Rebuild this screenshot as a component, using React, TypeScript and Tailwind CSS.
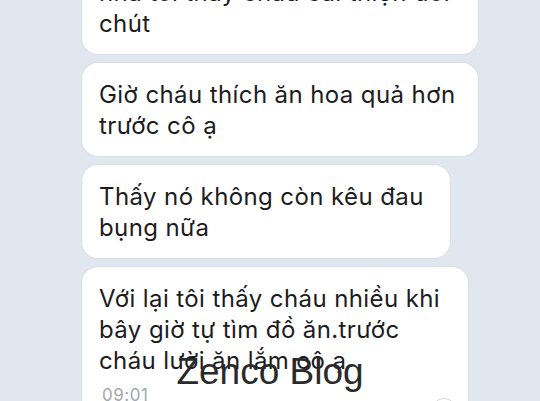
const msgs = [
  { id: 0, lines: ["nhà tôi thấy cháu cải thiện đôi", "chút"], w: "w-[396px]", extra: "-mt-[39px]" },
  { id: 1, lines: ["Giờ cháu thích ăn hoa quả hơn", "trước cô ạ"], w: "w-[396px]", extra: "" },
  { id: 2, lines: ["Thấy nó không còn kêu đau", "bụng nữa"], w: "w-[368px]", extra: "" },
];

function Bubble({ lines, w, extra }: { lines: string[]; w: string; extra: string }) {
  return (
    <div className={`${w} ${extra} shrink-0 bg-white rounded-[16px] px-[17px] pt-4 pb-[15px] shadow-[0_0_0_1px_rgba(0,0,0,0.03)]`}>
      {lines.map((l, i) => (
        <div key={i} className="leading-[31px] whitespace-nowrap">
          {l}
        </div>
      ))}
    </div>
  );
}

export default function App() {
  return (
    <div className="relative h-[401px] w-[540px] overflow-hidden bg-[#e1e7ef] font-['Inter',sans-serif] text-[24px] tracking-[0.4px] text-[#1c1c1e]">
      <div className="flex flex-col gap-[9px] pl-[82px]">
        {msgs.map((m) => (
          <Bubble key={m.id} lines={m.lines} w={m.w} extra={m.extra} />
        ))}

        <div className="relative w-[386px] h-[160px] shrink-0 bg-white rounded-[16px] px-[17px] pt-4 shadow-[0_0_0_1px_rgba(0,0,0,0.03)]">
          <div className="leading-[31px] whitespace-nowrap">Với lại tôi thấy cháu nhiều khi</div>
          <div className="leading-[31px] whitespace-nowrap">bây giờ tự tìm đồ ăn.trước</div>
          <div className="leading-[31px] whitespace-nowrap">cháu lười ăn lắm cô ạ</div>
          <div className="mt-[9px] ml-[3px] text-[17px] leading-[20px] tracking-[0.5px] text-[#a3a8ae]">09:01</div>
          <div className="absolute right-[11px] top-[131px] h-[26px] w-[26px] rounded-full border border-[#d4d7db] bg-white" />
        </div>
      </div>

      <div className="absolute left-0 right-0 top-[350px] text-center font-['Liberation_Sans',sans-serif] text-[37px] leading-[44px] tracking-normal text-[#2a2a2a]">
        Zenco Blog
      </div>
    </div>
  );
}
